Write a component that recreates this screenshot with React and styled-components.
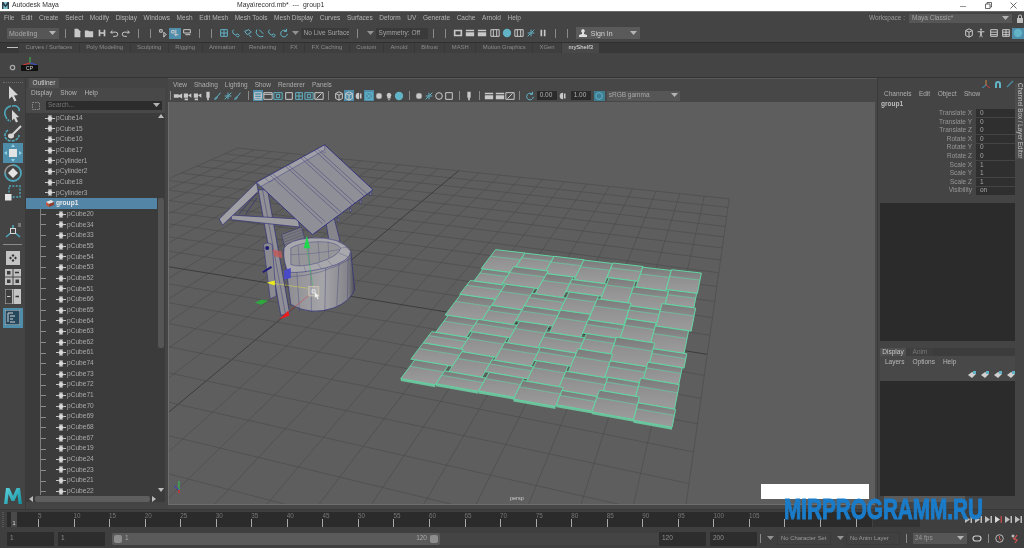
import React from 'react'
import styled, { createGlobalStyle } from 'styled-components'

const GlobalStyle = createGlobalStyle`
  html, body { margin: 0; padding: 0; background: #444; overflow: hidden; }
  * { box-sizing: border-box; }
`

// ---------- data ----------
const MENUS = ['File', 'Edit', 'Create', 'Select', 'Modify', 'Display', 'Windows', 'Mesh', 'Edit Mesh', 'Mesh Tools', 'Mesh Display', 'Curves', 'Surfaces', 'Deform', 'UV', 'Generate', 'Cache', 'Arnold', 'Help']
const SHELVES = ['Curves / Surfaces', 'Poly Modeling', 'Sculpting', 'Rigging', 'Animation', 'Rendering', 'FX', 'FX Caching', 'Custom', 'Arnold', 'Bifrost', 'MASH', 'Motion Graphics', 'XGen']
const TOP_ROWS = ['pCube14', 'pCube15', 'pCube16', 'pCube17', 'pCylinder1', 'pCylinder2', 'pCube18', 'pCylinder3']
const CHILD_ROWS = [20, 34, 33, 55, 54, 53, 52, 51, 66, 65, 64, 63, 62, 61, 74, 73, 72, 71, 70, 69, 68, 67, 19, 24, 23, 21, 22]
const CHANNELS = [['Translate X', '0'], ['Translate Y', '0'], ['Translate Z', '0'], ['Rotate X', '0'], ['Rotate Y', '0'], ['Rotate Z', '0'], ['Scale X', '1'], ['Scale Y', '1'], ['Scale Z', '1'], ['Visibility', 'on']]

const STATUS_A = ['|', 'file', 'folder', 'save', 'undo', 'redo', '|', '|', 'mask', 'maskB*', 'maskC', '|', '|', 'grid', 'magnet', 'magnetB', 'magnetC', 'magnet', 'spin']
const STATUS_B = ['|', '|', 'film', 'clap', 'clap', 'filmB', 'ball', 'filmB', 'link', 'pause', '|', '|']
const STATUS_C = ['cube', 'man', 'lines', 'table', 'ball*']
const PANEL_A = ['cam', 'camB', 'camB', 'mark', 'brush', 'link', 'brush', '|', 'lines*', 'frame', 'frameB', 'square', 'grid', 'frameB', 'frameC', '|', 'cube', 'cube*', 'half', 'mesh*', 'dot', 'bulb', 'ball', '|', 'dot', 'link', 'ring', 'square', '|', 'mark', '|', 'clap', 'clap', 'frameC', '|', 'spin']

// ---------- small drawings ----------
const SOLID = {
  file: 'M3 1h4l3 3v7H3z',
  folder: 'M1 3h4l1 1h5v7H1z',
  save: 'M2 2h8v8H2zM4 2v3h4V2zM4 7v3h4V7z',
  cam: 'M1 4h6v4H1zM7 5l4-2v6L7 7z',
  camB: 'M1 3h5v5H1zM6 5l4-2v5zM2 9h4v2H2z',
  mark: 'M4 1h4v7H4zM5 8h2v3H5z',
  half: 'M6 2a4 4 0 0 0 0 8zM7 3h2v6H7z',
  dot: 'M6 2l1 1h2v2l1 1-1 1v2H7l-1 1-1-1H3V7L2 6l1-1V3h2z',
  bulb: 'M6 2a3 3 0 0 1 2 5v2H4V7a3 3 0 0 1 2-5zM5 10h2v1H5z',
  pause: 'M3 2h2v8H3zM7 2h2v8H7z',
  man: 'M5 1h2v2H5zM2 4h8v1H7v3l1 3H7L6 8l-1 3H4l1-3V5H2z',
  ball: 'M6 1a5 5 0 1 1 0 10A5 5 0 0 1 6 1z',
  clap: 'M1 2h10v2H1zM1 5h10v5H1z',
  film: 'M1 2h10v8H1zM3 4v4h6V4z'
}
const LINE = {
  undo: 'M2 5h6a2.5 2.5 0 0 1 0 5H5M2 5l2-2M2 5l2 2',
  redo: 'M10 5H4a2.5 2.5 0 0 0 0 5h3M10 5L8 3M10 5L8 7',
  mask: 'M2 2h3v3H2zM7 5l3 3-2 1-1 2z',
  maskB: 'M2 3h3v3H2zM7 2v8M5 8h5',
  maskC: 'M2 2h8v4H2zM4 8h6',
  grid: 'M2 2h8v8H2zM6 2v8M2 6h8',
  magnet: 'M3 2a3.5 3.5 0 0 0 5 5l2 2-2 2-2-2',
  magnetB: 'M2 4l5-2 3 3-5 3zM7 8l3 3',
  magnetC: 'M2 2a6 6 0 0 0 8 8M5 2l5 5',
  spin: 'M9 4a4 4 0 1 0 1 3M9 1v3H6',
  lines: 'M2 2h8v8H2zM2 5h8M2 8h8',
  table: 'M2 2h8v8H2zM6 2v8M2 5h8M2 8h8',
  cube: 'M6 1l4 2v6l-4 2-4-2V3zM2 3l4 2 4-2M6 5v6',
  frame: 'M1 2h10v8H1zM1 4h10',
  frameB: 'M1 2h10v8H1zM4 4h4v4H4z',
  frameC: 'M1 2h10v8H1zM3 9l6-6',
  square: 'M2 2h8v8H2z',
  mesh: 'M2 2h8v8H2zM2 2l8 8M10 2l-8 8',
  ring: 'M6 2a4 4 0 1 1 0 8 4 4 0 0 1 0-8z',
  brush: 'M9 2L5 7M2 10c2 0 3-1 3-3l-2 1z',
  link: 'M2 10l3-3M7 5l3-3M6 2v8M2 6h8',
  filmB: 'M1 2h10v8H1zM4 2v8M8 2v8'
}
const CYAN = ['magnet', 'magnetB', 'magnetC', 'link', 'ball', 'spin', 'mesh', 'brush', 'frameB', 'grid']

const Glyph = ({ k, size = 10, accent }) => {
  const color = accent || CYAN.includes(k) ? '#62b3c6' : '#c8c8c8'
  return (
    <svg width={size} height={size} viewBox="0 0 12 12">
      {SOLID[k] && <path d={SOLID[k]} fill={color} fillRule="evenodd" />}
      {LINE[k] && <path d={LINE[k]} fill="none" stroke={color} strokeWidth="1.2" />}
    </svg>
  )
}

const SlotRow = ({ items, w }) => items.map((it, i) => {
  if (it === '|') return <Slot key={i} $w={w}><Divider /></Slot>
  const active = it.endsWith('*')
  return <Slot key={i} $w={w} $active={active}><Glyph k={it.replace('*', '')} /></Slot>
})

const Caret = () => (
  <svg width="7" height="5" viewBox="0 0 7 5"><path d="M0 0h7L3.5 4z" fill="#b4b4b4" /></svg>
)

const NodeIcon = () => (
  <svg width="10" height="7" viewBox="0 0 10 7">
    <path d="M5 0.5L8 3.5 5 6.5 2 3.5z" fill="#d8d8d8" />
    <path d="M0 3.5h2M8 3.5h2M3 1h4M3 6h4" stroke="#d8d8d8" strokeWidth="0.9" />
  </svg>
)

const ToolIcon = ({ k }) => {
  if (k === 'select') return <svg width="18" height="18" viewBox="0 0 18 18"><path d="M5 1l9 9-4 .5 2.5 5-2 1-2.5-5L5 14z" fill="#d6d6d6" /></svg>
  if (k === 'lasso') return <svg width="20" height="20" viewBox="0 0 20 20"><path d="M9 2c5-1 8 2 7 5M3 13C0 8 3 3 8 2" fill="none" stroke="#4fa6ba" strokeWidth="1.6" /><path d="M3 13c1 3 3 4 5 4" fill="none" stroke="#4fa6ba" strokeWidth="1.6" strokeDasharray="2 1" /><path d="M9 6l7 7-3 .4 2 4-2 1-2-4-2 2z" fill="#d6d6d6" /></svg>
  if (k === 'paint') return <svg width="20" height="20" viewBox="0 0 20 20"><path d="M5 6c-5 4-4 10 3 11 5 0 8-3 8-6" fill="none" stroke="#4fa6ba" strokeWidth="1.6" strokeDasharray="3 1" /><path d="M18 2L9 11" stroke="#d6d6d6" strokeWidth="2" /><ellipse cx="8" cy="12" rx="3" ry="2.4" fill="#d6d6d6" /></svg>
  if (k === 'move') return <svg width="18" height="18" viewBox="0 0 18 18"><rect x="5" y="5" width="8" height="8" fill="#e4e4e4" /><path d="M9 0l2 3H7zM9 18l2-3H7zM0 9l3-2v4zM18 9l-3-2v4z" fill="#8fd1e2" /></svg>
  if (k === 'rotate') return <svg width="20" height="20" viewBox="0 0 20 20"><path d="M10 2a8 8 0 1 1-8 8" fill="none" stroke="#4fa6ba" strokeWidth="1.8" /><path d="M2 10a8 8 0 0 1 8-8" fill="none" stroke="#9a9a9a" strokeWidth="1.4" /><path d="M10 5l5 5-5 5-5-5z" fill="#e4e4e4" /></svg>
  return <svg width="20" height="20" viewBox="0 0 20 20"><rect x="6" y="3" width="11" height="11" fill="none" stroke="#4fa6ba" strokeWidth="1.4" strokeDasharray="2 1.4" /><rect x="2" y="11" width="6.5" height="6.5" fill="#e4e4e4" /></svg>
}

// ---------- viewport scene ----------
const squareToQuad = ([p0, p1, p2, p3]) => {
  const dx1 = p1[0] - p2[0], dx2 = p3[0] - p2[0], dx3 = p0[0] - p1[0] + p2[0] - p3[0]
  const dy1 = p1[1] - p2[1], dy2 = p3[1] - p2[1], dy3 = p0[1] - p1[1] + p2[1] - p3[1]
  const den = dx1 * dy2 - dx2 * dy1
  const g = (dx3 * dy2 - dx2 * dy3) / den
  const h = (dx1 * dy3 - dx3 * dy1) / den
  const a = p1[0] - p0[0] + g * p1[0], b = p3[0] - p0[0] + h * p3[0]
  const d = p1[1] - p0[1] + g * p1[1], e = p3[1] - p0[1] + h * p3[1]
  return (s, t) => {
    const w = g * s + h * t + 1
    return [(a * s + b * t + p0[0]) / w, (d * s + e * t + p0[1]) / w]
  }
}

const ground = squareToQuad([[458, 171], [729, 199], [707, 355], [314, 291]])
const gp = (u, v) => ground(u / 12, (v + 12) / 12)

const GridLines = () => {
  const lines = []
  for (let i = -12; i <= 12; i++) {
    const strong = i === 0
    const a = gp(i, -12), b = gp(i, 12), c = gp(-12, i), e = gp(12, i)
    const col = strong ? '#3c3c3c' : '#4c4c4c'
    const sw = strong ? 1 : 0.7
    lines.push(<line key={'u' + i} x1={a[0]} y1={a[1]} x2={b[0]} y2={b[1]} stroke={col} strokeWidth={sw} />)
    lines.push(<line key={'v' + i} x1={c[0]} y1={c[1]} x2={e[0]} y2={e[1]} stroke={col} strokeWidth={sw} />)
  }
  return <g>{lines}</g>
}

// the tile patch is close to flat on screen, so plain bilinear works better than the ground mapping
const CORNERS = [[495, 250], [701, 274], [671, 427], [398, 378]]
const patch = (s, t) => {
  const [a, b, c, d] = CORNERS
  const x = (1 - t) * ((1 - s) * a[0] + s * b[0]) + t * ((1 - s) * d[0] + s * c[0])
  const y = (1 - t) * ((1 - s) * a[1] + s * b[1]) + t * ((1 - s) * d[1] + s * c[1])
  return [x, y]
}
const COLS = 7
const ROWS = 8
const rowEdge = (i, j) => {
  if (j === 0) return 0.004 * Math.sin(i * 3)
  const amp = j === ROWS ? 0.06 : 0.2
  return (j + amp * Math.sin(i * 2.3 + j * 1.7)) / ROWS
}
const colEdge = (i, j) => {
  if (i === 0) return 0.01 * Math.sin(j * 2)
  if (i === COLS) return 1 - 0.006 * Math.sin(j * 2.6)
  return (i + 0.07 * Math.sin(j * 1.9 + i * 3.1)) / COLS
}

const pts = (list) => list.map((p) => p[0].toFixed(1) + ',' + p[1].toFixed(1)).join(' ')

const Patch = () => {
  const tiles = []
  for (let j = 0; j < ROWS; j++) {
    for (let i = 0; i < COLS; i++) {
      const t0 = rowEdge(i, j), t1 = rowEdge(i, j + 1)
      const s0 = colEdge(i, j), s1 = colEdge(i + 1, j)
      const a = patch(s0, t0), b = patch(s1, t0), c = patch(s1, t1), d = patch(s0, t1)
      const m0 = patch(s0, t0 + (t1 - t0) * 0.34), m1 = patch(s1, t0 + (t1 - t0) * 0.34)
      tiles.push(
        <g key={i + '-' + j}>
          {j === ROWS - 1 && <polygon points={pts([d, c, [c[0], c[1] + 2.4], [d[0], d[1] + 2.4]])} fill="#6cc09b" />}
          <polygon points={pts([a, b, m1, m0])} fill="url(#tileTop)" />
          <polygon points={pts([m0, m1, c, d])} fill="url(#tileBody)" />
          <polyline points={pts([m0, m1])} fill="none" stroke="#6ed0a8" strokeWidth="0.7" />
          <polygon points={pts([a, b, c, d])} fill="none" stroke="#62d6a4" strokeWidth="1" />
        </g>
      )
    }
  }
  return <g>{tiles}</g>
}

const Well = () => (
  <g transform="translate(210 140) scale(0.3333)" strokeLinejoin="round">
    <polygon points="345,245 370,235 388,305 355,305" fill="#85858b" stroke="#2d2d7c" strokeWidth="2" />
    <polygon points="212,285 272,262 282,298 222,322" fill="#77777d" stroke="#2d2d7c" strokeWidth="1.5" />
    <path d="M214 292l60-22M216 300l60-22M218 308l60-22M220 316l60-22" stroke="#4a4a6a" strokeWidth="1.2" />
    {/* drum */}
    <path d="M218 330L240 495Q300 530 370 505Q420 485 432 450L420 335z" fill="url(#drum)" stroke="#2d2d7c" strokeWidth="2" />
    <path d="M258 395L266 516M300 392L302 520M345 380L342 516M385 365L378 498M412 350L410 478" stroke="#3f3f78" strokeWidth="1.2" fill="none" />
    <path d="M232 412Q330 410 425 355" fill="none" stroke="#3f3f78" strokeWidth="1.2" />
    {/* rim */}
    <path d="M220 325Q235 300 300 295Q390 290 420 335Q420 365 345 385Q270 402 232 398Q215 360 220 325z" fill="#a8a8ac" stroke="#2d2d7c" strokeWidth="1.6" />
    <path d="M240 325Q270 308 320 306Q375 305 390 325Q385 350 320 370Q265 385 240 375z" fill="#95959a" stroke="#2d2d7c" strokeWidth="1.2" />
    <path d="M262 318L266 378M292 310L296 375M322 306L326 366M352 306L354 356M240 345Q300 345 385 330M390 325L418 322M384 340L412 352M350 362L368 380M320 370L332 388M280 380L285 396" stroke="#4a4a80" strokeWidth="1" fill="none" />
    {/* front post and crank */}
    <polygon points="142,150 170,150 236,520 210,528" fill="#8f8f95" stroke="#2d2d7c" strokeWidth="2" />
    <path d="M155 150L224 524" stroke="#3a3a78" strokeWidth="1.4" />
    <path d="M158 315Q170 305 184 315L196 470L178 478z" fill="#8a8a90" stroke="#2d2d7c" strokeWidth="1.6" />
    <circle cx="169" cy="325" r="6" fill="#1e1e70" />
    <line x1="156" y1="398" x2="182" y2="382" stroke="#1d1d78" strokeWidth="6" />
    {/* brace */}
    <polygon points="60,226 262,238 266,262 62,240" fill="#9c9ca1" stroke="#2d2d7c" strokeWidth="2" />
    <polygon points="137,128 25,238 35,256 142,155" fill="#a0a0a5" stroke="#2d2d7c" strokeWidth="2" />
    <path d="M138 160L85 222M138 175L105 222" stroke="#2d2d7c" strokeWidth="2" fill="none" />
    {/* roof */}
    <path d="M478 155l0 14 6-6zM448 178l0 14 6-4zM417 203l0 14 6-4zM380 232l0 14 6-4z" fill="#8a8a90" stroke="#2d2d7c" strokeWidth="1.5" />
    <polygon points="137,128 342,15 487,150 305,285" fill="#8f8f97" stroke="#2a2a80" strokeWidth="2.6" />
    <polygon points="137,128 150,140 342,30 342,15" fill="#a0a0a6" stroke="#2a2a80" strokeWidth="1.2" />
    <path d="M178 106L335 252M186 102L343 246M225 80L382 222M233 76L390 216M270 54L425 196M278 50L433 190M312 32L462 170M320 28L470 164" stroke="#36367a" strokeWidth="1.4" />
    <path d="M163 115l12 12 12-6M330 30l12 10 4-4" fill="none" stroke="#56567f" strokeWidth="1.4" />
    {/* transform gizmo */}
    <line x1="288" y1="322" x2="306" y2="440" stroke="#22c24a" strokeWidth="2" strokeDasharray="5 3" />
    <polygon points="288,288 279,326 298,326" fill="#1fd94c" />
    <line x1="190" y1="432" x2="290" y2="446" stroke="#d9d94a" strokeWidth="2" strokeDasharray="6 2" />
    <polygon points="167,430 192,423 192,438" fill="#ecec1c" />
    <line x1="232" y1="518" x2="296" y2="466" stroke="#d83a3a" strokeWidth="2" strokeDasharray="5 2" />
    <polygon points="205,540 232,514 236,528" fill="#ee1a1a" />
    <polygon points="220,392 240,385 240,415 220,420" fill="#4a4ac8" />
    <polygon points="186,330 212,336 214,356 190,350" fill="#c05a5a" opacity="0.85" />
    <polygon points="132,490 152,480 172,484 152,496" fill="#2ea83e" />
    <rect x="294" y="441" width="30" height="28" fill="rgba(200,200,200,0.35)" stroke="#c9c2ae" strokeWidth="3" />
    <rect x="304" y="451" width="9" height="9" fill="none" stroke="#fff" strokeWidth="2" />
    <path d="M312 458l14 12-6 1 4 7-4 1-3-7-5 3z" fill="#eee" />
  </g>
)

const Scene = () => (
  <SceneSvg viewBox="168 102 707 403" preserveAspectRatio="none">
    <defs>
      <linearGradient id="tileTop" x1="0" y1="0" x2="0" y2="1">
        <stop offset="0" stopColor="#7a7a7a" />
        <stop offset="1" stopColor="#8a8a8a" />
      </linearGradient>
      <linearGradient id="tileBody" x1="0" y1="0" x2="0" y2="1">
        <stop offset="0" stopColor="#8e8e8e" />
        <stop offset="1" stopColor="#9c9c9c" />
      </linearGradient>
      <linearGradient id="drum" x1="0" y1="0" x2="1" y2="0">
        <stop offset="0" stopColor="#8a8a90" />
        <stop offset="0.55" stopColor="#a5a5a9" />
        <stop offset="0.9" stopColor="#84848a" />
        <stop offset="1" stopColor="#4a4a55" />
      </linearGradient>
    </defs>
    <GridLines />
    <Patch />
    <Well />
    <path d="M178 491v-9" stroke="#2ecc55" strokeWidth="1" />
    <path d="M178 491l-5-4" stroke="#3838c8" strokeWidth="1" />
    <path d="M178 491v3" stroke="#d83030" strokeWidth="1.5" />
  </SceneSvg>
)

// ---------- page ----------
export default function App() {
  return (
    <Page>
      <GlobalStyle />
      <TitleBar>
        <AppIcon><svg width="7" height="7" viewBox="0 0 7 7"><path d="M0 7V0h1.5L3.5 3l2-3H7v7H5.6V3L3.5 5.5 1.4 3v4z" fill="#2e3f4a" /></svg></AppIcon>
        <AppName>Autodesk Maya</AppName>
        <DocName>Maya\record.mb*&nbsp;&nbsp;---&nbsp;&nbsp;group1</DocName>
        <WinControls>
          <svg width="6" height="6" viewBox="0 0 6 6"><path d="M0 3.5h6" stroke="#777" strokeWidth="0.8" /></svg>
          <svg width="7" height="7" viewBox="0 0 7 7"><path d="M.5 2h4.5v4.5H.5zM2 2V.5h4.5V5H5" fill="none" stroke="#444" strokeWidth="0.8" /></svg>
          <svg width="7" height="7" viewBox="0 0 7 7"><path d="M.5.5l6 6M6.5.5l-6 6" stroke="#444" strokeWidth="0.8" /></svg>
        </WinControls>
      </TitleBar>

      <MenuBar>
        {MENUS.map((m) => <MenuItem key={m}>{m}</MenuItem>)}
        <Workspace>
          <span>Workspace :</span>
          <WorkspaceBox>Maya Classic*<Caret /></WorkspaceBox>
          <svg width="8" height="9" viewBox="0 0 8 9"><path d="M1 4h6v5H1zM2 4V2.5a2 2 0 0 1 4 0V4H5V2.5a1 1 0 0 0-2 0V4z" fill="#bdbdbd" /></svg>
        </Workspace>
      </MenuBar>

      <StatusLine>
        <ModeSelect>Modeling<Caret /></ModeSelect>
        <SlotRow items={STATUS_A} w={12.2} />
        <ArrowSlot><Caret /></ArrowSlot>
        <FieldBox $w={48}>No Live Surface</FieldBox>
        <Slot $w={17}><Divider /></Slot>
        <ArrowSlot><Caret /></ArrowSlot>
        <FieldBox $w={52}>Symmetry: Off</FieldBox>
        <SlotRow items={STATUS_B} w={12.2} />
        <SignIn>
          <svg width="8" height="9" viewBox="0 0 8 9"><path d="M4 0a2 2 0 0 1 1 3.6V5l3 1v2H0V6l3-1V3.6A2 2 0 0 1 4 0z" fill="#e0e0e0" /></svg>
          <span>Sign In</span>
          <CaretEnd><Caret /></CaretEnd>
        </SignIn>
        <StatusRight>
          <SlotRow items={STATUS_C} w={12.2} />
        </StatusRight>
      </StatusLine>

      <ShelfTabs>
        <ShelfHandle />
        {SHELVES.map((s) => <ShelfTab key={s}>{s}</ShelfTab>)}
        <ShelfTab $active>myShelf3</ShelfTab>
      </ShelfTabs>
      <Shelf>
        <ShelfGear><svg width="7" height="7" viewBox="0 0 7 7"><circle cx="3.5" cy="3.5" r="2.2" fill="none" stroke="#a8a8a8" strokeWidth="1.3" /></svg></ShelfGear>
        <ShelfItem>
          <svg width="16" height="8" viewBox="0 0 16 8"><path d="M8 0v6" stroke="#37c14d" /><path d="M8 6L1 8" stroke="#d33" /><path d="M8 6l7 2" stroke="#3a4fd6" /></svg>
          <CpLabel>CP</CpLabel>
        </ShelfItem>
      </Shelf>

      <Main>
        <ToolBox>
          <ToolGrip />
          <ToolButton $h={20}><ToolIcon k="select" /></ToolButton>
          <ToolButton $h={20}><ToolIcon k="lasso" /></ToolButton>
          <ToolButton $h={19}><ToolIcon k="paint" /></ToolButton>
          <ToolButton $h={20} $active><ToolIcon k="move" /></ToolButton>
          <ToolButton $h={20}><ToolIcon k="rotate" /></ToolButton>
          <ToolButton $h={20}><ToolIcon k="scale" /></ToolButton>
          <ManipSlot>
            <svg width="20" height="18" viewBox="0 0 20 18"><path d="M10 9v-6M10 9l-7 6M10 9l7 6" stroke="#4fa6ba" strokeWidth="1.6" /><rect x="7.5" y="6.5" width="5" height="5" fill="#444" stroke="#d6d6d6" /><path d="M15 2h3M15 4h3" stroke="#aaa" /></svg>
          </ManipSlot>
          <ToolRule />
          <LayoutBtn>
            <svg width="14" height="14" viewBox="0 0 14 14"><rect width="14" height="14" fill="#c4c4c4" /><path d="M7 3l1.5 1.5L7 6 5.5 4.5zM7 8l1.5 1.5L7 11 5.5 9.5zM3 7l1.5-1.5L6 7 4.5 8.5zM11 7L9.5 5.5 8 7l1.5 1.5z" fill="#333" /></svg>
          </LayoutBtn>
          <LayoutBtn>
            <svg width="16" height="16" viewBox="0 0 16 16"><path d="M0 0h7.5v7.5H0zM8.5 0H16v7.5H8.5zM0 8.5h7.5V16H0zM8.5 8.5H16V16H8.5z" fill="#c0c0c0" /><path d="M2 2h3.5v3.5H2zM2 10.5h3.5V14H2zM10.5 10.5H14V14h-3.5z" fill="#3d3d3d" /><path d="M10 3.5h4" stroke="#333" strokeWidth="1.5" /></svg>
          </LayoutBtn>
          <LayoutBtn>
            <svg width="16" height="15" viewBox="0 0 16 15"><rect width="7.5" height="15" fill="#3f3f3f" stroke="#bbb" /><rect x="8.5" width="7.5" height="15" fill="#c4c4c4" /><path d="M2 7.5h3.5" stroke="#ccc" /><path d="M10.5 7.5h3.5" stroke="#333" strokeWidth="1.5" /></svg>
          </LayoutBtn>
          <ToolButton $h={20} $active $top={1}>
            <svg width="15" height="15" viewBox="0 0 15 15"><rect width="15" height="15" fill="#26485c" stroke="#c4c4c4" /><path d="M3 3h5M5 6h5M5 9h3M5 12h5M3 3v9" stroke="#d4d4d4" /></svg>
          </ToolButton>
          <MayaLogo>
            <svg width="18" height="16" viewBox="0 0 18 16">
              <defs><linearGradient id="mLogo" x1="0" y1="0" x2="1" y2="1"><stop offset="0" stopColor="#5fd3e0" /><stop offset="1" stopColor="#0f8f9b" /></linearGradient></defs>
              <path d="M0 16L2 0h3.5L9 8l3.5-8H16l2 16h-3.5L13.500 6 10.500 13h-3L4.500 6 3.500 16z" fill="url(#mLogo)" />
            </svg>
          </MayaLogo>
        </ToolBox>

        <Outliner>
          <PanelTab>Outliner</PanelTab>
          <PanelMenu>
            <span>Display</span><span>Show</span><span>Help</span>
          </PanelMenu>
          <SearchRow>
            <svg width="8" height="8" viewBox="0 0 8 8"><path d="M.5.5h7v7h-7z" fill="none" stroke="#8a8a8a" strokeDasharray="1.5 1" /></svg>
            <SearchBox>Search...<Caret /></SearchBox>
          </SearchRow>
          <TreeArea>
            <TreeList>
              {TOP_ROWS.map((r) => (
                <Row key={r}><NodeWrap><NodeIcon /></NodeWrap>{r}</Row>
              ))}
              <Row $selected>
                <NodeWrap>
                  <svg width="8" height="7" viewBox="0 0 8 7"><path d="M0 2l5-2 3 2-5 2z" fill="#e4e4e4" /><path d="M0 2l3 2v3L0 5z" fill="#c9573f" /><path d="M3 4l5-2v3L3 7z" fill="#8f3f2f" /></svg>
                </NodeWrap>
                group1
              </Row>
              {CHILD_ROWS.map((n) => (
                <Row key={n} $child><NodeWrap><NodeIcon /></NodeWrap>pCube{n}</Row>
              ))}
              <TreeLine />
            </TreeList>
            <VScroll>
              <svg width="6" height="4" viewBox="0 0 6 4"><path d="M0 4h6L3 0z" fill="#bbb" /></svg>
              <VThumb />
              <svg width="6" height="4" viewBox="0 0 6 4"><path d="M0 0h6L3 4z" fill="#bbb" /></svg>
            </VScroll>
          </TreeArea>
          <HScroll>
            <svg width="4" height="6" viewBox="0 0 4 6"><path d="M4 0v6L0 3z" fill="#bbb" /></svg>
            <HThumb />
            <svg width="4" height="6" viewBox="0 0 4 6"><path d="M0 0v6l4-3z" fill="#bbb" /></svg>
          </HScroll>
        </Outliner>

        <ViewPanel>
          <ViewMenu>
            {['View', 'Shading', 'Lighting', 'Show', 'Renderer', 'Panels'].map((m) => <span key={m}>{m}</span>)}
          </ViewMenu>
          <ViewTools>
            <Slot $w={5}><Divider /></Slot>
            <SlotRow items={PANEL_A} w={10.05} />
            <NumBox>0.00</NumBox>
            <Slot $w={12}><Glyph k="half" /></Slot>
            <NumBox>1.00</NumBox>
            <GammaIcon><Glyph k="ring" accent /></GammaIcon>
            <GammaSelect>sRGB gamma<Caret /></GammaSelect>
          </ViewTools>
          <Canvas>
            <Scene />
            <PerspLabel>persp</PerspLabel>
          </Canvas>
        </ViewPanel>

        <ChannelPanel>
          <ChannelMain>
            <ChannelIcons>
              <svg width="8" height="8" viewBox="0 0 8 8"><path d="M4 0v5" stroke="#c84" /><path d="M4 5L0 8" stroke="#49c" /><path d="M4 5l4 3" stroke="#c44" /></svg>
              <svg width="8" height="8" viewBox="0 0 8 8"><path d="M1 8V4a3 3 0 0 1 6 0v4H5V4a1 1 0 0 0-2 0v4z" fill="#62b3c6" /></svg>
              <svg width="8" height="8" viewBox="0 0 8 8"><path d="M1 7l6-6" stroke="#4a8fa6" strokeWidth="1.2" /></svg>
            </ChannelIcons>
            <ChannelMenu>
              <span>Channels</span><span>Edit</span><span>Object</span><span>Show</span>
            </ChannelMenu>
            <NodeTitle>group1</NodeTitle>
            {CHANNELS.map(([label, val]) => (
              <ChannelRow key={label}>
                <ChannelLabel>{label}</ChannelLabel>
                <ChannelValue>{val}</ChannelValue>
              </ChannelRow>
            ))}
            <DarkPanel $h={138} $top={8} />
            <Splitter />
            <LayerTabs>
              <LayerTab $active>Display</LayerTab>
              <LayerTab>Anim</LayerTab>
            </LayerTabs>
            <LayerMenu>
              <span>Layers</span><span>Options</span><span>Help</span>
            </LayerMenu>
            <LayerIcons>
              {[0, 1, 2, 3].map((i) => (
                <svg key={i} width="8" height="7" viewBox="0 0 8 7"><path d="M0 4l4-3 4 2-4 4z" fill="#d0d0d0" /><path d="M5 0h3v3H5z" fill="#62b3c6" /></svg>
              ))}
            </LayerIcons>
            <DarkPanel $h={115} $top={0} />
            <LayerScroll />
          </ChannelMain>
          <SideTab><span>Channel Box / Layer Editor</span></SideTab>
        </ChannelPanel>
      </Main>

      <TimeLine>
        <TimeGrip />
        <Ruler>
          <CurrentFrame>1</CurrentFrame>
          {Array.from({ length: 24 }, (_, i) => (i + 1) * 5).map((frame, i) => (
            <TickCell key={frame} $first={i === 0}>
              {/* 110 and up sit under the watermark */}
              {frame <= 105 && <TickLabel>{frame}</TickLabel>}
            </TickCell>
          ))}
        </Ruler>
        <Playback>
          <PlayBox />
          <PlayIcons>
            {[0, 1, 2, 3, 4, 5].map((i) => (
              <svg key={i} width="7" height="7" viewBox="0 0 7 7"><path d="M0 0l5 3.5L0 7z" fill={i === 3 ? '#d8d8d8' : '#bdbdbd'} /><path d="M5.5 0H7v7H5.5z" fill={i === 3 ? '#b34a4a' : '#bdbdbd'} /></svg>
            ))}
          </PlayIcons>
        </Playback>
      </TimeLine>

      <RangeBar>
        <RangeInput $w={47}>1</RangeInput>
        <RangeInput $w={47} $ml={4}>1</RangeInput>
        <RangeTrack>
          <RangeThumb />
          <RangeVal>1</RangeVal>
          <RangeEnd>120</RangeEnd>
          <RangeThumb />
        </RangeTrack>
        <RangeFill />
        <RangeInput $w={47}>120</RangeInput>
        <RangeInput $w={47} $ml={4}>200</RangeInput>
        <Slot $w={6}><Divider /></Slot>
        <ArrowSlot $w={10} $ml={2}><Caret /></ArrowSlot>
        <RangeSelect $ml={2}>No Character Set</RangeSelect>
        <ArrowSlot $w={10} $ml={4}><Caret /></ArrowSlot>
        <RangeSelect $ml={1}>No Anim Layer</RangeSelect>
        <Slot $w={13}><Divider /></Slot>
        <FpsSelect>24 fps<Caret /></FpsSelect>
        <RangeIcons>
          <svg width="10" height="7" viewBox="0 0 10 7"><rect x="1" y="1" width="8" height="5" rx="2.5" fill="none" stroke="#cfcfcf" strokeWidth="1.2" /></svg>
          <Divider />
          <svg width="9" height="9" viewBox="0 0 9 9"><circle cx="4.5" cy="4.5" r="3.8" fill="none" stroke="#bbb" /><path d="M4.5 2v3l2 1" stroke="#c55" fill="none" /></svg>
          <svg width="10" height="10" viewBox="0 0 10 10"><circle cx="3" cy="2" r="1.5" fill="#bbb" /><path d="M3 4l4 2-2 3M7 1L4 6" stroke="#c55" fill="none" strokeWidth="1.2" /></svg>
        </RangeIcons>
      </RangeBar>
      <RedStrip />

      <WhitePatch />
      <Watermark>MIRPROGRAMM.RU</Watermark>
    </Page>
  )
}

// ---------- styles ----------
const Page = styled.div`
  position: relative;
  width: 1024px;
  height: 548px;
  overflow: hidden;
  display: flex;
  flex-direction: column;
  background: #444;
  color: #b9b9b9;
  font-family: "Liberation Sans", Arial, sans-serif;
  font-size: 6.5px;
  line-height: 1;
  filter: blur(0.35px);
`
const TitleBar = styled.div`
  height: 12px;
  flex: none;
  background: #fff;
  color: #333;
  display: flex;
  align-items: center;
  font-size: 6.8px;
  border-bottom: 1px solid #6a6a6a;
`
const AppIcon = styled.div`
  width: 7px;
  height: 7px;
  margin-left: 2px;
  background: #7fc6d6;
  display: flex;
`
const AppName = styled.span`
  margin-left: 3px;
  width: 225px;
`
const DocName = styled.span`
  white-space: nowrap;
`
const WinControls = styled.div`
  margin-left: auto;
  width: 64px;
  padding-right: 7px;
  display: flex;
  justify-content: space-between;
  align-items: center;
`
const MenuBar = styled.div`
  height: 12px;
  flex: none;
  display: flex;
  align-items: center;
  padding-left: 4px;
  gap: 6.65px;
  color: #b5b5b5;
`
const MenuItem = styled.span`
  white-space: nowrap;
`
const Workspace = styled.div`
  margin-left: auto;
  display: flex;
  align-items: center;
  gap: 4px;
  color: #9c9c9c;
`
const WorkspaceBox = styled.div`
  width: 103px;
  height: 9px;
  background: #565656;
  color: #a4a4a4;
  display: flex;
  align-items: center;
  justify-content: space-between;
  padding: 0 3px;
`
const StatusLine = styled.div`
  height: 18px;
  flex: none;
  display: flex;
  align-items: center;
  padding-left: 7px;
`
const ModeSelect = styled.div`
  width: 52px;
  height: 11px;
  flex: none;
  background: #565656;
  color: #a8a8a8;
  font-size: 7px;
  display: flex;
  align-items: center;
  justify-content: space-between;
  padding: 0 3px 0 2px;
`
const Slot = styled.div`
  width: ${(p) => p.$w}px;
  height: 11px;
  flex: none;
  display: flex;
  align-items: center;
  justify-content: center;
  background: ${(p) => (p.$active ? '#4f8eab' : 'transparent')};
`
const Divider = styled.div`
  width: 1px;
  height: 9px;
  background: #8a8a8a;
`
const ArrowSlot = styled.div`
  width: ${(p) => p.$w || 10}px;
  margin-left: ${(p) => p.$ml || 0}px;
  flex: none;
  display: flex;
  justify-content: center;
  opacity: 0.7;
`
const FieldBox = styled.div`
  width: ${(p) => p.$w}px;
  height: 11px;
  flex: none;
  background: #3a3a3a;
  color: #a2a2a2;
  display: flex;
  align-items: center;
  padding-left: 3px;
  white-space: nowrap;
  overflow: hidden;
`
const SignIn = styled.div`
  width: 64px;
  height: 12px;
  flex: none;
  margin-left: 2px;
  background: #5a5a5a;
  color: #d2d2d2;
  font-size: 7px;
  display: flex;
  align-items: center;
  gap: 4px;
  padding: 0 3px;
`
const CaretEnd = styled.span`
  margin-left: auto;
`
const StatusRight = styled.div`
  margin-left: auto;
  display: flex;
`
const ShelfTabs = styled.div`
  height: 11px;
  flex: none;
  background: #383838;
  border-top: 1px solid #2f2f2f;
  display: flex;
  align-items: flex-end;
  padding-left: 7px;
  gap: 1px;
  font-size: 5.9px;
`
const ShelfHandle = styled.div`
  width: 11px;
  height: 10px;
  flex: none;
  background: linear-gradient(#383838 4px, #c0c0c0 4px, #c0c0c0 5px, #383838 5px);
`
const ShelfTab = styled.div`
  height: 10px;
  padding: 0 6.45px;
  display: flex;
  align-items: center;
  white-space: nowrap;
  background: ${(p) => (p.$active ? '#484848' : '#3f3f3f')};
  color: ${(p) => (p.$active ? '#e2e2e2' : '#8c8c8c')};
`
const Shelf = styled.div`
  height: 25px;
  flex: none;
  background: #444;
  display: flex;
  align-items: flex-end;
  padding: 0 0 6px 7px;
  gap: 4px;
  border-bottom: 1px solid #333;
`
const ShelfGear = styled.div`
  width: 10px;
  display: flex;
  justify-content: center;
`
const ShelfItem = styled.div`
  width: 17px;
  display: flex;
  flex-direction: column;
  align-items: center;
`
const CpLabel = styled.div`
  width: 17px;
  height: 6px;
  background: #111;
  color: #ddd;
  font-size: 5px;
  text-align: center;
  line-height: 6px;
`
const Main = styled.div`
  height: 431px;
  flex: none;
  display: flex;
`
const ToolBox = styled.div`
  width: 25px;
  flex: none;
  display: flex;
  flex-direction: column;
  align-items: center;
  background: #444;
  padding-top: 4px;
`
const ToolGrip = styled.div`
  width: 20px;
  height: 2px;
  border-top: 1px dotted #6e6e6e;
`
const ToolButton = styled.div`
  width: 20px;
  height: ${(p) => p.$h}px;
  margin-top: ${(p) => p.$top || 0}px;
  flex: none;
  display: flex;
  align-items: center;
  justify-content: center;
  background: ${(p) => (p.$active ? '#4f8eab' : 'transparent')};
`
const ManipSlot = styled.div`
  height: 20px;
  margin-top: 18px;
  flex: none;
  display: flex;
  align-items: center;
`
const ToolRule = styled.div`
  width: 19px;
  height: 1px;
  background: #8a8a8a;
  margin: 3px 0;
`
const LayoutBtn = styled.div`
  width: 18px;
  height: 19.5px;
  flex: none;
  display: flex;
  align-items: center;
  justify-content: center;
`
const MayaLogo = styled.div`
  margin-top: auto;
  margin-bottom: 5px;
  display: flex;
`
const Outliner = styled.div`
  width: 143px;
  flex: none;
  display: flex;
  flex-direction: column;
  padding-right: 3px;
  background: #444;
  border-left: 1px solid #3a3a3a;
`
const PanelTab = styled.div`
  width: 30px;
  height: 10px;
  margin-left: 3px;
  background: #505050;
  color: #cfcfcf;
  display: flex;
  align-items: center;
  justify-content: center;
  flex: none;
`
const PanelMenu = styled.div`
  height: 10px;
  flex: none;
  display: flex;
  align-items: center;
  gap: 8px;
  padding-left: 5px;
  background: #484848;
  color: #b5b5b5;
`
const SearchRow = styled.div`
  height: 15px;
  flex: none;
  display: flex;
  align-items: center;
  padding-left: 6px;
  background: #484848;
  gap: 6px;
`
const SearchBox = styled.div`
  flex: 1;
  margin-right: 3px;
  height: 9px;
  background: #2c2c2c;
  color: #777;
  display: flex;
  align-items: center;
  justify-content: space-between;
  padding: 0 2px;
`
const TreeArea = styled.div`
  height: 382px;
  flex: none;
  display: flex;
  background: #3b3b3b;
  overflow: hidden;
`
const TreeList = styled.div`
  position: relative;
  flex: 1;
  overflow: hidden;
`
const Row = styled.div`
  height: 10.67px;
  display: flex;
  align-items: center;
  padding-left: ${(p) => (p.$child ? 29 : 18)}px;
  gap: 1px;
  background: ${(p) => (p.$selected ? '#5285a6' : 'transparent')};
  color: ${(p) => (p.$selected ? '#e8e8e8' : '#a9a9a9')};
  font-weight: ${(p) => (p.$selected ? 700 : 400)};
  font-size: 6.6px;
  white-space: nowrap;
`
const NodeWrap = styled.span`
  width: 11px;
  display: flex;
  justify-content: center;
`
const TreeLine = styled.div`
  position: absolute;
  left: 14px;
  top: 96px;
  bottom: 0;
  width: 6px;
  border-left: 1px solid #7e7e7e;
  background: repeating-linear-gradient(#0000 0, #0000 4.8px, #8c8c8c 4.8px, #8c8c8c 5.8px, #0000 5.8px, #0000 10.67px);
`
const VScroll = styled.div`
  width: 8px;
  flex: none;
  display: flex;
  flex-direction: column;
  align-items: center;
  padding: 1px 0 3px;
  position: relative;
  justify-content: space-between;
`
const VThumb = styled.div`
  position: absolute;
  top: 85px;
  left: 1px;
  width: 6px;
  height: 150px;
  background: #555;
  border-radius: 2px;
`
const HScroll = styled.div`
  height: 7px;
  flex: none;
  display: flex;
  align-items: center;
  gap: 2px;
  padding: 0 9px 0 3px;
  background: #3b3b3b;
`
const HThumb = styled.div`
  flex: 1;
  height: 6px;
  background: #5e5e5e;
  border-radius: 2px;
`
const ViewPanel = styled.div`
  width: 709px;
  flex: none;
  display: flex;
  flex-direction: column;
  padding: 1px 2px 4px 0;
  border-top: 1px solid #5a5a5a;
  background: #474747;
`
const ViewMenu = styled.div`
  height: 10px;
  flex: none;
  display: flex;
  align-items: center;
  gap: 7px;
  padding-left: 5px;
  color: #aeaeae;
`
const ViewTools = styled.div`
  height: 11px;
  flex: none;
  display: flex;
  align-items: center;
`
const NumBox = styled.div`
  width: 20px;
  height: 9px;
  flex: none;
  margin-left: 2px;
  background: #2b2b2b;
  color: #b0b0b0;
  display: flex;
  align-items: center;
  padding-left: 3px;
`
const GammaIcon = styled.div`
  width: 11px;
  height: 10px;
  margin-left: 3px;
  flex: none;
  background: #3f7d92;
  display: flex;
  align-items: center;
  justify-content: center;
`
const GammaSelect = styled.div`
  width: 73px;
  height: 10px;
  margin-left: 2px;
  flex: none;
  background: #565656;
  color: #a8a8a8;
  display: flex;
  align-items: center;
  justify-content: space-between;
  padding: 0 2px;
`
const Canvas = styled.div`
  position: relative;
  flex: 1;
  margin-top: 1px;
  background: #5e5e5e;
  overflow: hidden;
  border-left: 1px solid #6e6e6e;
  border-bottom: 1px solid #6e6e6e;
`
const SceneSvg = styled.svg`
  display: block;
  width: 100%;
  height: 100%;
`
const PerspLabel = styled.span`
  position: absolute;
  left: 341px;
  bottom: 3px;
  color: #d0d0d0;
  font-size: 5.5px;
`
const ChannelPanel = styled.div`
  flex: 1;
  display: flex;
  border-left: 1px solid #3a3a3a;
  background: #444;
`
const ChannelMain = styled.div`
  flex: 1;
  display: flex;
  flex-direction: column;
  padding-left: 2px;
`
const ChannelIcons = styled.div`
  height: 10px;
  margin-top: 1px;
  flex: none;
  display: flex;
  justify-content: flex-end;
  align-items: center;
  gap: 4px;
  padding-right: 1px;
`
const ChannelMenu = styled.div`
  height: 10px;
  flex: none;
  display: flex;
  align-items: center;
  gap: 7.5px;
  padding-left: 4px;
  color: #afafaf;
`
const NodeTitle = styled.div`
  height: 10px;
  flex: none;
  display: flex;
  align-items: center;
  padding-left: 1px;
  font-weight: 700;
  color: #bdbdbd;
`
const ChannelRow = styled.div`
  height: 8.6px;
  flex: none;
  display: flex;
  align-items: center;
  gap: 4px;
`
const ChannelLabel = styled.span`
  width: 92px;
  text-align: right;
  color: #979797;
`
const ChannelValue = styled.span`
  width: 39px;
  height: 8px;
  background: #2f2f2f;
  color: #a8a8a8;
  padding-left: 4px;
  display: flex;
  align-items: center;
`
const DarkPanel = styled.div`
  height: ${(p) => p.$h}px;
  margin-top: ${(p) => p.$top}px;
  flex: none;
  background: #2b2b2b;
`
const Splitter = styled.div`
  height: 7px;
  flex: none;
`
const LayerTabs = styled.div`
  height: 8px;
  flex: none;
  display: flex;
  gap: 1px;
  background: #3c3c3c;
`
const LayerTab = styled.div`
  width: 26px;
  display: flex;
  align-items: center;
  justify-content: center;
  background: ${(p) => (p.$active ? '#505050' : '#3f3f3f')};
  color: ${(p) => (p.$active ? '#c6c6c6' : '#777')};
`
const LayerMenu = styled.div`
  height: 13px;
  flex: none;
  display: flex;
  align-items: center;
  gap: 8px;
  padding-left: 5px;
  background: #484848;
`
const LayerIcons = styled.div`
  height: 12px;
  flex: none;
  display: flex;
  justify-content: flex-end;
  align-items: center;
  gap: 5px;
  background: #484848;
`
const LayerScroll = styled.div`
  height: 6px;
  flex: none;
  background: linear-gradient(90deg, #444 4px, #5a5a5a 4px, #5a5a5a 85px, #444 85px);
`
const SideTab = styled.div`
  width: 9px;
  flex: none;
  padding-top: 5px;
  span {
    writing-mode: vertical-rl;
    width: 9px;
    height: 76px;
    background: #4d4d4d;
    color: #c4c4c4;
    white-space: nowrap;
    font-size: 6.3px;
    display: flex;
    align-items: center;
    justify-content: flex-start;
  }
`
const TimeLine = styled.div`
  height: 20px;
  flex: none;
  display: flex;
  align-items: center;
  background: #3f3f3f;
  border-top: 1px solid #383838;
`
const TimeGrip = styled.div`
  width: 7px;
  height: 15px;
  flex: none;
  background: repeating-linear-gradient(#555 0 1px, #3f3f3f 1px 2px);
  border-left: 2px solid #3f3f3f;
  border-right: 3px solid #3f3f3f;
`
const Ruler = styled.div`
  width: 865px;
  height: 15px;
  flex: none;
  display: flex;
  background: #2b2b2b;
`
const CurrentFrame = styled.div`
  width: 6px;
  flex: none;
  margin-left: 4px;
  background: #4a4a4a;
  color: #ddd;
  font-size: 5.5px;
  display: flex;
  align-items: flex-end;
  justify-content: center;
  padding-bottom: 1px;
`
const TickCell = styled.div`
  position: relative;
  width: ${(p) => (p.$first ? 22 : 35.55)}px;
  flex: none;
  &::after {
    content: '';
    position: absolute;
    right: 0;
    bottom: 0;
    width: 1px;
    height: 8px;
    background: #a8a8a8;
  }
`
const TickLabel = styled.span`
  position: absolute;
  left: calc(100% - 1px);
  top: 1px;
  color: #777;
  font-size: 6.3px;
`
const Playback = styled.div`
  flex: 1;
  display: flex;
  align-items: center;
  height: 15px;
`
const PlayBox = styled.div`
  width: 47px;
  height: 15px;
  margin-left: 1px;
  background: #333;
`
const PlayIcons = styled.div`
  margin-left: auto;
  display: flex;
  gap: 3px;
  padding-right: 2px;
`
const RangeBar = styled.div`
  height: 19px;
  flex: none;
  display: flex;
  align-items: center;
  padding-left: 7px;
  background: #3f3f3f;
`
const RangeInput = styled.div`
  width: ${(p) => p.$w}px;
  margin-left: ${(p) => p.$ml || 0}px;
  height: 14px;
  flex: none;
  background: #2d2d2d;
  border-radius: 1px;
  color: #8e8e8e;
  display: flex;
  align-items: center;
  padding-left: 3px;
`
const RangeTrack = styled.div`
  width: 328px;
  height: 12px;
  flex: none;
  margin-left: 7px;
  background: #5a5a5a;
  border-radius: 2px;
  display: flex;
  align-items: center;
  padding: 0 2px;
  color: #a8a8a8;
`
const RangeThumb = styled.div`
  width: 8px;
  height: 8px;
  background: #8d8d8d;
  border-radius: 2px;
`
const RangeVal = styled.span`
  margin-left: 3px;
`
const RangeEnd = styled.span`
  margin-left: auto;
  margin-right: 3px;
`
const RangeFill = styled.div`
  width: 219px;
  height: 12px;
  flex: none;
  background: #444;
`
const RangeSelect = styled.div`
  width: 54px;
  margin-left: ${(p) => p.$ml || 0}px;
  height: 13px;
  flex: none;
  border: 1px solid #3a3a3a;
  background: #404040;
  color: #9a9a9a;
  font-size: 5.9px;
  display: flex;
  align-items: center;
  padding-left: 3px;
  white-space: nowrap;
  overflow: hidden;
`
const FpsSelect = styled.div`
  width: 54px;
  height: 11px;
  flex: none;
  background: #565656;
  color: #999;
  display: flex;
  align-items: center;
  justify-content: space-between;
  padding: 0 3px 0 2px;
`
const RangeIcons = styled.div`
  flex: 1;
  display: flex;
  align-items: center;
  gap: 6px;
  padding-left: 5px;
`
const RedStrip = styled.div`
  height: 2px;
  flex: none;
  background: linear-gradient(90deg, #3f3f3f 9px, #5b2020 9px, #5b2020 584px, #3f3f3f 584px);
`
const WhitePatch = styled.div`
  position: absolute;
  left: 761px;
  top: 484px;
  width: 108px;
  height: 15px;
  background: #fff;
`
const Watermark = styled.div`
  position: absolute;
  left: 784px;
  top: 495px;
  font-family: "Liberation Sans", Arial, sans-serif;
  font-weight: 700;
  font-size: 30px;
  line-height: 28px;
  color: #1b7cc9;
  white-space: nowrap;
  transform-origin: 0 50%;
  transform: scaleX(0.69);
  -webkit-text-stroke: 1.1px #1b7cc9;
`
